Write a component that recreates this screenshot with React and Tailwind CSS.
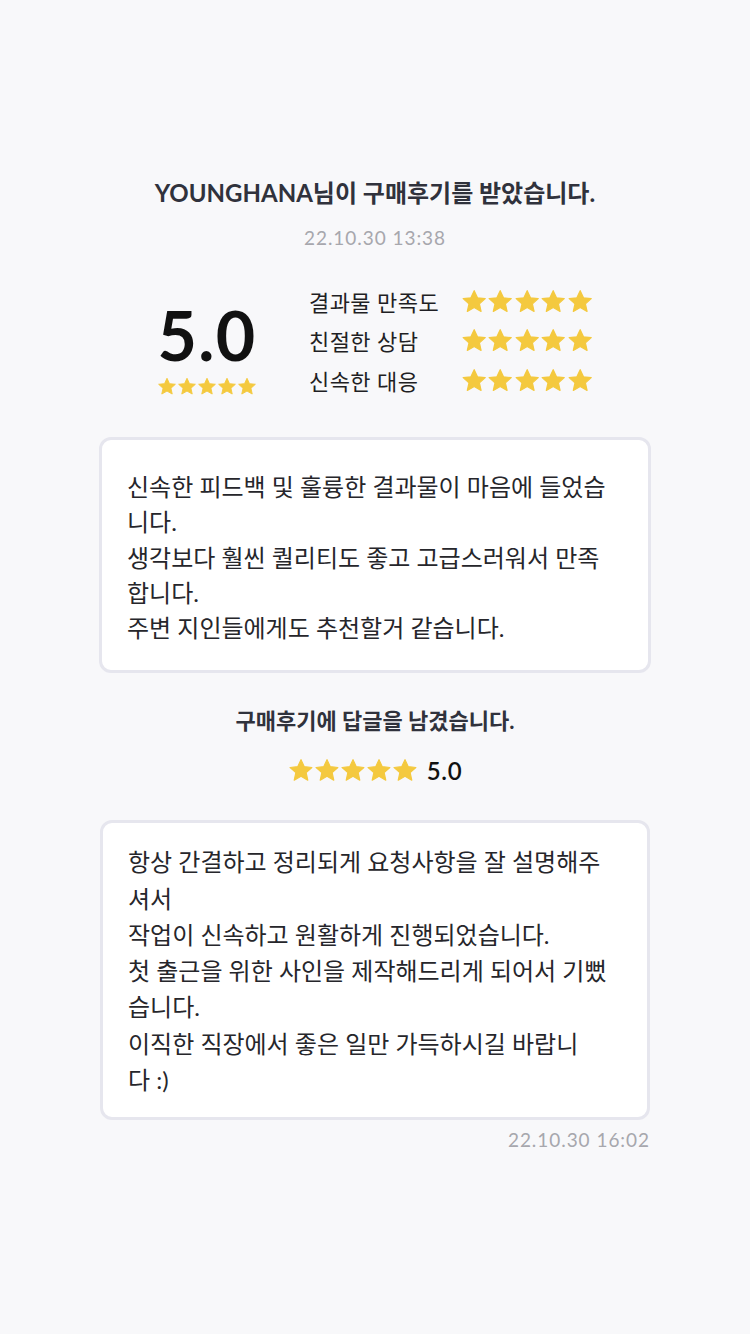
import React from "react";

const font = { fontFamily: '"Lato", "Noto Sans CJK KR", sans-serif' };

function Star({ size }) {
  return (
    <svg width={size} height={size} viewBox="0 0 24 24">
      <path
        d="M12 1.5l3 6.5 7.05.75-5.3 4.75 1.5 6.95L12 16.9l-6.25 3.55 1.5-6.95-5.3-4.75L9 8z"
        fill="#f4c93f"
        stroke="#f4c93f"
        strokeWidth="1.1"
        strokeLinejoin="round"
      />
    </svg>
  );
}

function Stars({ size }) {
  return (
    <div className="flex">
      {[0, 1, 2, 3, 4].map((i) => (
        <Star key={i} size={size} />
      ))}
    </div>
  );
}

const ratings = ["결과물 만족도", "친절한 상담", "신속한 대응"];

export default function App() {
  return (
    <main
      className="min-h-screen w-full bg-[#f8f8fa] flex flex-col items-center pt-[176px]"
      style={font}
    >
      <h1 className="text-[24px] font-bold text-[#30323c] leading-[34px]">
        YOUNGHANA님이 구매후기를 받았습니다.
      </h1>
      <p className="mt-[16px] text-[19px] tracking-[0.05em] text-[#a7a7ad] leading-[24px]">
        22.10.30 13:38
      </p>

      {/* score summary */}
      <div className="mt-[36px] flex items-start w-[552px] pl-[56px]">
        <div className="mt-[14px] flex flex-col items-center w-[104px]">
          <span className="text-[68px] font-bold tracking-[0.02em] text-[#111] leading-[70px]">
            5.0
          </span>
          <div className="mt-[7px]">
            <Stars size={20} />
          </div>
        </div>
        <div className="ml-[50px] flex flex-col gap-[7.5px]">
          {ratings.map((r) => (
            <div key={r} className="flex items-center h-[32px]">
              <span className="w-[152px] text-[22px] tracking-[0.02em] text-[#1f1f24]">{r}</span>
              <Stars size={26.4} />
            </div>
          ))}
        </div>
      </div>

      <div className="mt-[40px] w-[552px] bg-white border-[3px] border-[#e6e6ee] rounded-[12px] px-[25px] pt-[29px] pb-[25px] text-[24px] leading-[35.3px] text-[#26262b]">
        <p>신속한 피드백 및 훌륭한 결과물이 마음에 들었습</p>
        <p>니다.</p>
        <p>생각보다 훨씬 퀄리티도 좋고 고급스러워서 만족</p>
        <p>합니다.</p>
        <p>주변 지인들에게도 추천할거 같습니다.</p>
      </div>

      <h2 className="mt-[33px] text-[22px] font-bold text-[#30323c] leading-[30px]">
        구매후기에 답글을 남겼습니다.
      </h2>
      <div className="mt-[17px] flex items-center gap-[9px]">
        <Stars size={26} />
        <span className="text-[24px] font-semibold tracking-[0.03em] text-[#111]">
          5.0
        </span>
      </div>

      <div className="mt-[31px] w-[550px] bg-white border-[3px] border-[#e6e6ee] rounded-[12px] px-[25px] pt-[21px] pb-[19px] text-[24px] leading-[36.2px] text-[#26262b]">
        <p>항상 간결하고 정리되게 요청사항을 잘 설명해주</p>
        <p>셔서</p>
        <p>작업이 신속하고 원활하게 진행되었습니다.</p>
        <p>첫 출근을 위한 사인을 제작해드리게 되어서 기뻤</p>
        <p>습니다.</p>
        <p>이직한 직장에서 좋은 일만 가득하시길 바랍니</p>
        <p>다 :)</p>
      </div>
      <div className="w-[550px] flex justify-end mt-[6px]">
        <span className="text-[19px] tracking-[0.05em] text-[#a7a7ad]">
          22.10.30 16:02
        </span>
      </div>
    </main>
  );
}
